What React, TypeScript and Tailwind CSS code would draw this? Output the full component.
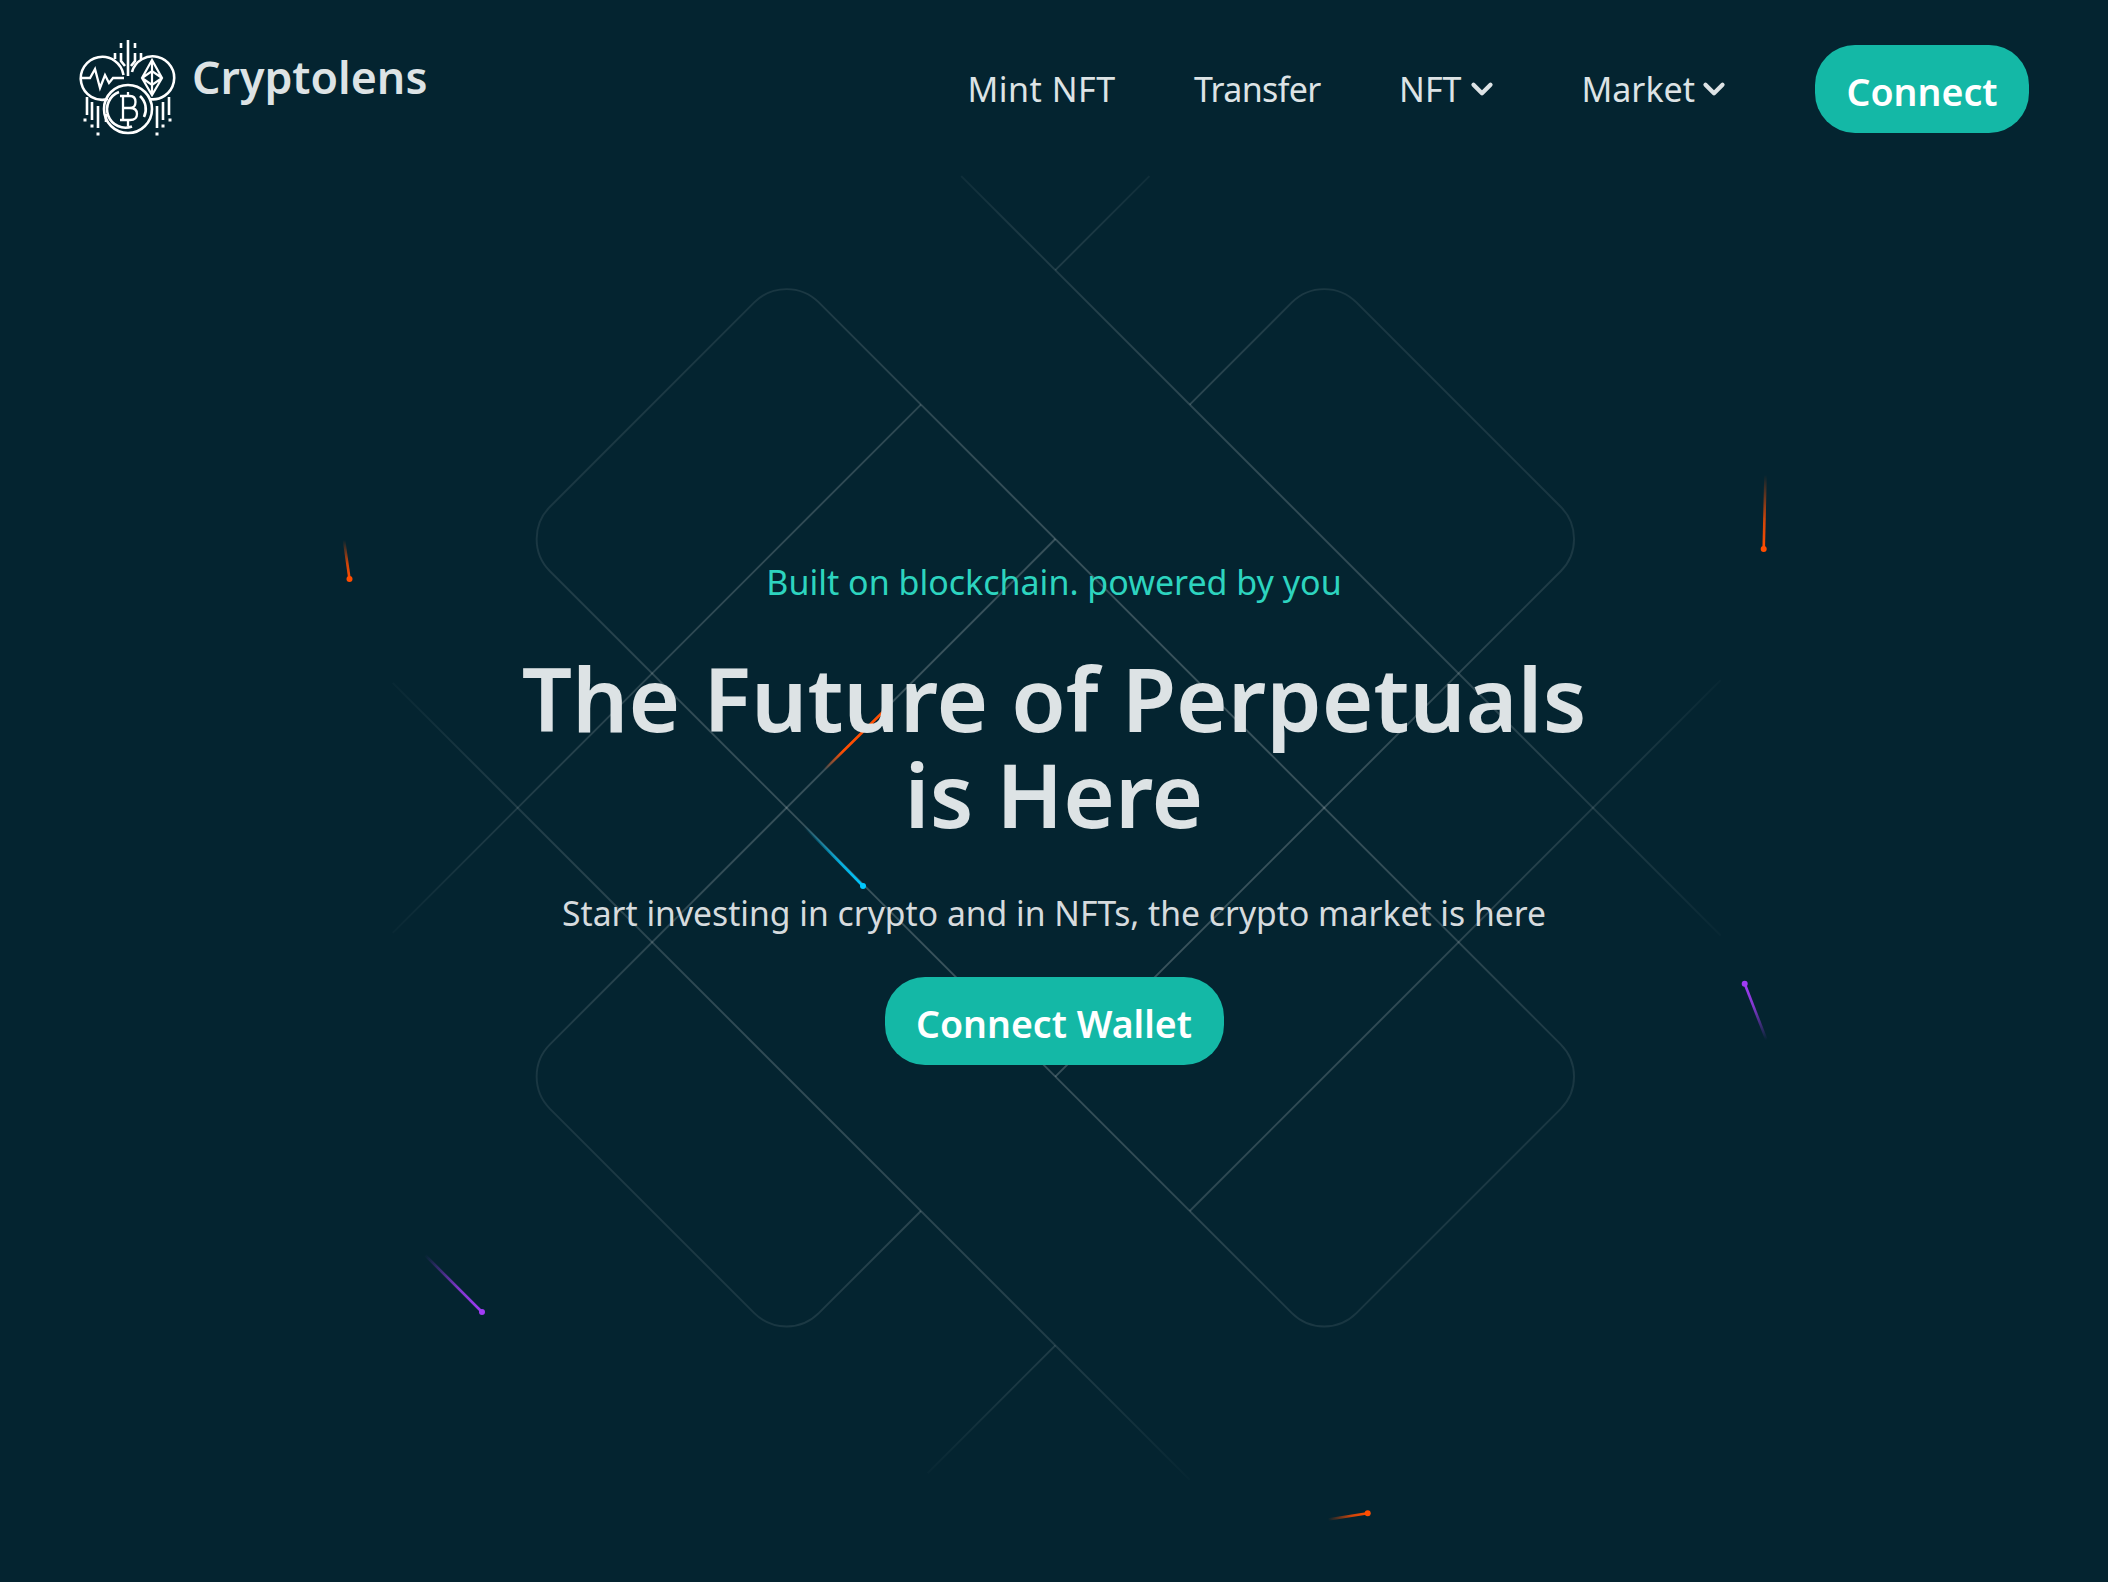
import { ChevronDown } from "lucide-react";

const stars = [
  { id: "s1", x1: 344, y1: 540, x2: 349.5, y2: 579, c: "#ff4d00", o: 0.8 },
  { id: "s2", x1: 1765.5, y1: 475, x2: 1763.7, y2: 549, c: "#ff4d00", o: 0.8 },
  { id: "s3", x1: 824, y1: 770, x2: 887, y2: 708, c: "#ff4d00", o: 1 },
  { id: "s4", x1: 804, y1: 826, x2: 863, y2: 886, c: "#00c8ff", o: 0.8 },
  { id: "s5", x1: 1766.5, y1: 1040, x2: 1744.7, y2: 983.7, c: "#a03cf5", o: 0.8 },
  { id: "s6", x1: 425, y1: 1255, x2: 482, y2: 1312, c: "#a03cf5", o: 0.8 },
  { id: "s7", x1: 1328, y1: 1519.5, x2: 1367.7, y2: 1513.3, c: "#ff4d00", o: 0.8 },
];

function Lines() {
  return (
    <svg className="absolute left-0 top-0 pointer-events-none" width="2108" height="1582" viewBox="0 0 1568 1177" fill="none">
      <defs>
        <radialGradient id="fade" gradientUnits="userSpaceOnUse" cx="785" cy="601" r="510">
          <stop offset="0" stopColor="#fff" stopOpacity="0.24" />
          <stop offset="0.55" stopColor="#fff" stopOpacity="0.18" />
          <stop offset="0.85" stopColor="#fff" stopOpacity="0.09" />
          <stop offset="1" stopColor="#fff" stopOpacity="0.01" />
        </radialGradient>
      </defs>
      <g stroke="url(#fade)" strokeWidth="1.4">
        <path d="M885 301 L961 225 A34 34 0 0 1 1009 225 L1161 377 A34 34 0 0 1 1161 425 L785 801" />
        <path d="M785 401 L409 777 A34 34 0 0 0 409 825 L561 977 A34 34 0 0 0 609 977 L685 901" />
        <path d="M409 377 L561 225 A34 34 0 0 1 609 225 L1161 777 A34 34 0 0 1 1161 825 L1009 977 A34 34 0 0 1 961 977 L409 425 A34 34 0 0 1 409 377 Z" />
        <path d="M715 131 L1280 696" />
        <path d="M292 508 L885 1101" />
        <path d="M855 131 L785 201 M685 301 L292 694" />
        <path d="M885 901 L1280 506 M785 1001 L690 1096" />
      </g>
    </svg>
  );
}

function Stars() {
  return (
    <svg className="absolute left-0 top-0 pointer-events-none" width="2108" height="1582" viewBox="0 0 2108 1582" fill="none">
      <defs>
        {stars.map((s) => (
          <linearGradient key={s.id} id={s.id} gradientUnits="userSpaceOnUse" x1={s.x1} y1={s.y1} x2={s.x2} y2={s.y2}>
            <stop offset="0" stopColor={s.c} stopOpacity="0" />
            <stop offset={s.id === "s3" ? "0.3" : "0.6"} stopColor={s.c} stopOpacity={s.o} />
            <stop offset="1" stopColor={s.c} />
          </linearGradient>
        ))}
      </defs>
      {stars.map((s) => (
        <g key={s.id}>
          <line x1={s.x1} y1={s.y1} x2={s.x2} y2={s.y2} stroke={`url(#${s.id})`} strokeWidth="2.6" />
          {s.id !== "s3" && <circle cx={s.x2} cy={s.y2} r="3" fill={s.c} />}
        </g>
      ))}
    </svg>
  );
}

function Logo() {
  return (
    <svg width="120" height="115" viewBox="0 0 120 115" fill="none" stroke="#fff" strokeWidth="2.6" className="-ml-[10px] -mt-[10px] shrink-0">
      <path d="M38 69 A21.5 21.5 0 1 1 53.5 45" />
      <path d="M62 42 A21.5 21.5 0 1 1 79 69" />
      <circle cx="58" cy="79" r="24" />
      <path d="M49 62 A18 18 0 0 0 62 96.5 M70 66 A18 18 0 0 1 74 87" />
      <path d="M53 66 V90 M50 66 H60 Q65.5 66 65.5 72 Q65.5 78 60 78 H53 M60 78 Q67 78 67 84 Q67 90 60 90 H50 M58 62 V66 M58 90 V96" strokeWidth="2.3" />
      <path d="M12 48 H20 L25 39 L30 58 L35 45 L39 53 L43 48 H54" strokeWidth="2.3" />
      <path d="M82 30 L72 48 L82 65 L92 48 Z M72 48 L82 41 L92 48 M72 48 L82 55 L92 48 M82 30 V65" strokeWidth="2.2" />
      <path d="M58 10 V46 M51 13 V18 M65 13 V18 M51 23 V31 L55 36 M65 23 V31 L61 36 M45 23 V29 M71 23 V29" />
      <path d="M17 67 V85 M22 72 V90 M28 76 V98 M36 84 V92 M99 67 V85 M93 72 V90 M87 76 V98" />
      <path d="M13.5 90 h3 M98.5 90 h3 M20.5 96 h3 M91.5 96 h3 M26.5 104 h3 M85.5 104 h3" strokeWidth="3" />
    </svg>
  );
}

export default function App() {
  return (
    <div className="relative w-[2108px] h-[1582px] overflow-hidden bg-[#042430] font-['Noto_Sans',sans-serif]">
      <Lines />
      <Stars />
      <header className="relative flex items-start justify-between pl-[80px] pr-[79px] pt-[40px]">
        <div className="flex items-start h-[96px] w-[96px]">
          <Logo />
          <span className="ml-[2px] shrink-0 mt-[7px] text-[44.7px] leading-[60px] font-semibold text-[#dde3e5]">Cryptolens</span>
        </div>
        <nav className="flex items-center gap-20 text-[#dde3e5] text-[34px] mt-[5px]">
          <a className="tracking-[0.5px]">Mint NFT</a>
          <a className="-ml-[1.5px] tracking-[-0.67px]">Transfer</a>
          <a className="-ml-[1.5px] flex items-center">NFT<ChevronDown size={34} strokeWidth={3} className="ml-[4px] mr-[2px]" /></a>
          <a className="flex items-center">Market<ChevronDown size={34} strokeWidth={3} className="ml-[2px] mr-[4px]" /></a>
          <button className="w-[214px] h-[88px] pt-[6px] rounded-[40px] bg-[#14b8a6] text-white font-semibold text-[37.5px]">Connect</button>
        </nav>
      </header>
      <main className="relative flex flex-col items-center text-center pt-[422px]">
        <p className="text-[#2dd4bf] text-[34px] leading-[48px]">Built on blockchain. powered by you</p>
        <h1 className="mt-[44px] text-[#dde3e5] text-[88.5px] leading-[96px] font-semibold">The Future of Perpetuals<br />is Here</h1>
        <p className="mt-[47px] text-[#d6dbde] text-[33.7px] leading-[48px]">Start investing in crypto and in NFTs, the crypto market is here</p>
        <button className="mt-[40px] w-[339px] h-[88px] pt-[6px] rounded-[40px] bg-[#14b8a6] text-white font-semibold text-[37.5px]">Connect Wallet</button>
      </main>
    </div>
  );
}
